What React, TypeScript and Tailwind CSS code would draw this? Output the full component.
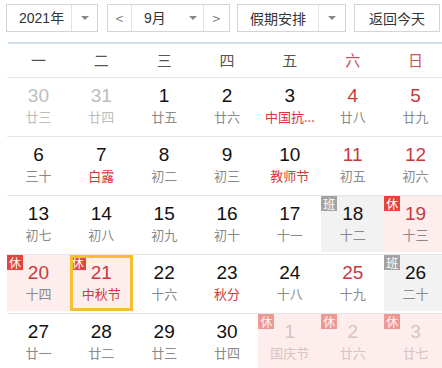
type Day = {
  n: number;
  l: string;
  out?: boolean;
  red?: boolean;
  fest?: boolean;
  tag?: '休' | '班';
  today?: boolean;
};

const weeks: Day[][] = [
  [
    { n: 30, l: '廿三', out: true },
    { n: 31, l: '廿四', out: true },
    { n: 1, l: '廿五' },
    { n: 2, l: '廿六' },
    { n: 3, l: '中国抗...', fest: true },
    { n: 4, l: '廿八', red: true },
    { n: 5, l: '廿九', red: true },
  ],
  [
    { n: 6, l: '三十' },
    { n: 7, l: '白露', fest: true },
    { n: 8, l: '初二' },
    { n: 9, l: '初三' },
    { n: 10, l: '教师节', fest: true },
    { n: 11, l: '初五', red: true },
    { n: 12, l: '初六', red: true },
  ],
  [
    { n: 13, l: '初七' },
    { n: 14, l: '初八' },
    { n: 15, l: '初九' },
    { n: 16, l: '初十' },
    { n: 17, l: '十一' },
    { n: 18, l: '十二', tag: '班' },
    { n: 19, l: '十三', red: true, tag: '休' },
  ],
  [
    { n: 20, l: '十四', red: true, tag: '休' },
    { n: 21, l: '中秋节', red: true, fest: true, tag: '休', today: true },
    { n: 22, l: '十六' },
    { n: 23, l: '秋分', fest: true },
    { n: 24, l: '十八' },
    { n: 25, l: '十九', red: true },
    { n: 26, l: '二十', tag: '班' },
  ],
  [
    { n: 27, l: '廿一' },
    { n: 28, l: '廿二' },
    { n: 29, l: '廿三' },
    { n: 30, l: '廿四' },
    { n: 1, l: '国庆节', out: true, tag: '休' },
    { n: 2, l: '廿六', out: true, tag: '休' },
    { n: 3, l: '廿七', out: true, tag: '休' },
  ],
];

const weekdays = ['一', '二', '三', '四', '五', '六', '日'];

function Caret() {
  return <span className="inline-block w-0 h-0 border-l-[4px] border-r-[4px] border-t-[4px] border-l-transparent border-r-transparent border-t-[#888]" />;
}

function Cell({ d }: { d: Day }) {
  const bg = d.tag === '休' ? 'bg-[#fdeded]' : d.tag === '班' ? 'bg-[#f2f2f2]' : 'bg-white';
  let num = 'text-[#111]';
  let lun = 'text-[#8a8a8a]';
  if (d.red) num = 'text-[#c9383e]';
  if (d.fest) lun = 'text-[#d6363c]';
  if (d.out) {
    num = d.tag ? 'text-[#d9c3c3]' : 'text-[#bdbdbd]';
    lun = d.tag ? 'text-[#d9c3c3]' : 'text-[#bdbdbd]';
  }
  return (
    <div className={`relative h-[56px] flex flex-col items-center pt-[6px] ${bg}`}>
      {d.tag && (
        <span
          className={`absolute top-0 left-0 w-[16px] h-[15px] flex items-center justify-center text-[12px] leading-none text-white ${
            d.tag === '休' ? 'bg-[#e2453c]' : 'bg-[#a3a3a3]'
          } ${d.out ? 'opacity-50' : ''}`}
        >
          {d.tag}
        </span>
      )}
      {d.today && <div className="absolute inset-0 border-[3px] border-[#f4c02f]" />}
      <span className={`text-[19px] leading-[24px] font-['Liberation_Sans','Noto_Sans_CJK_SC',sans-serif] ${num}`}>{d.n}</span>
      <span className={`whitespace-nowrap text-center text-[13px] leading-[18px] ${lun}`}>{d.l}</span>
    </div>
  );
}

export default function App() {
  return (
    <div className="w-[442px] h-[368px] overflow-hidden bg-white font-['Noto_Sans_CJK_SC',sans-serif]">
      {/* toolbar */}
      <div className="flex items-center pl-[6px] pt-[4px] h-[32px] text-[14px] text-[#333]">
        <div className="flex h-[28px] w-[92px] border border-[#d4d4d4] bg-white">
          <span className="flex-1 flex items-center pl-[12px] border-r border-[#e2e2e2] font-['Liberation_Sans','Noto_Sans_CJK_SC',sans-serif]">2021年</span>
          <span className="w-[25px] flex items-center justify-center"><Caret /></span>
        </div>
        <div className="flex h-[28px] w-[123px] ml-[9px] border border-[#d4d4d4] bg-white">
          <span className="w-[24px] flex items-center justify-center border-r border-[#e2e2e2] text-[#777]">&lt;</span>
          <span className="flex-1 flex items-center pl-[12px] font-['Liberation_Sans','Noto_Sans_CJK_SC',sans-serif]">9月</span>
          <span className="w-[22px] flex items-center justify-center border-r border-[#e2e2e2]"><Caret /></span>
          <span className="w-[25px] flex items-center justify-center text-[#777]">&gt;</span>
        </div>
        <div className="flex h-[28px] w-[109px] ml-[7px] border border-[#d4d4d4] bg-white">
          <span className="flex-1 flex items-center justify-center border-r border-[#e2e2e2]">假期安排</span>
          <span className="w-[26px] flex items-center justify-center"><Caret /></span>
        </div>
        <div className="flex h-[28px] w-[86px] ml-[8px] items-center justify-center border border-[#d4d4d4] bg-white">
          返回今天
        </div>
      </div>

      <div className="ml-[8px] mt-[10px] h-[2px] bg-[#d3e0ee]" />

      {/* weekdays */}
      <div className="ml-[7px] w-[440px] grid grid-cols-7 h-[34px] items-center border-b border-[#e6e6e6] text-[15px]">
        {weekdays.map((w, i) => (
          <span key={w} className={`text-center ${i >= 5 ? 'text-[#d2505a]' : 'text-[#555]'}`}>
            {w}
          </span>
        ))}
      </div>

      {/* weeks */}
      <div className="ml-[7px] w-[440px]">
        {weeks.map((wk, i) => (
          <div key={i} className="grid grid-cols-7 pb-[2px] border-b border-[#e6e6e6]">
            {wk.map((d, j) => (
              <Cell key={j} d={d} />
            ))}
          </div>
        ))}
      </div>
    </div>
  );
}
